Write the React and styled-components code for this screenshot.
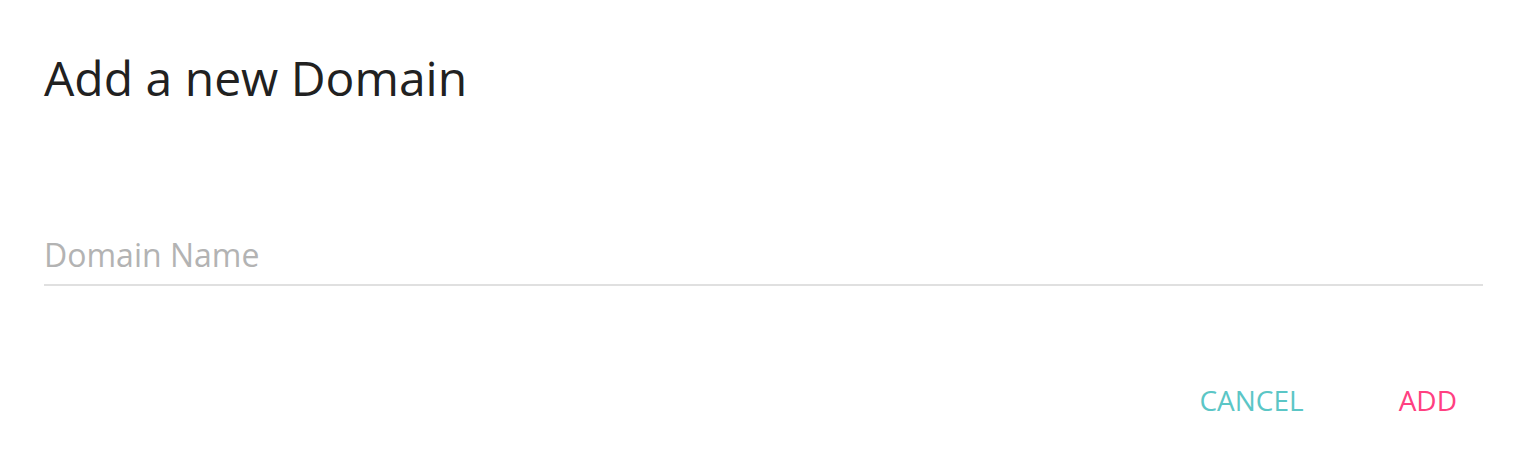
import React, {useState} from 'react';
import styled, {createGlobalStyle} from 'styled-components';

const GlobalStyle = createGlobalStyle`
    body {
        margin: 0;
        background: #ffffff;
        font-family: "Open Sans", "Liberation Sans", sans-serif;
    }
`;

const Dialog = styled.div`
    width: 1520px;
    height: 450px;
    box-sizing: border-box;
    padding: 45px 37px 0 44px;
    display: flex;
    flex-direction: column;
`;

const Title = styled.h2`
    margin: 0;
    font-size: 48px;
    font-weight: 400;
    line-height: normal;
    color: #212121;
`;

const Field = styled.div`
    margin-top: 123px;
    border-bottom: 2px solid #e0e0e0;
`;

const Input = styled.input`
    display: block;
    width: 100%;
    box-sizing: border-box;
    border: none;
    outline: none;
    padding: 0 0 8px;
    font-family: "Open Sans", "Liberation Sans", sans-serif;
    font-size: 32px;
    line-height: normal;
    color: #212121;
    background: transparent;

    &::placeholder {
        color: #b3b3b3;
        opacity: 1;
    }
`;

const Actions = styled.div`
    margin-top: 95px;
    display: flex;
    justify-content: flex-end;
    gap: 95px;
    padding-right: 26px;
`;

const Button = styled.button`
    border: none;
    background: none;
    padding: 0;
    font-family: "Open Sans", "Liberation Sans", sans-serif;
    font-size: 28px;
    line-height: normal;
    text-transform: uppercase;
    color: ${props => props.$primary ? '#ff4081' : '#5bc6c6'};
    cursor: pointer;
`;

const App = () => {
    const [name, setName] = useState('');
    return (
        <Dialog>
            <GlobalStyle />
            <Title>Add a new Domain</Title>
            <Field>
                <Input
                    placeholder="Domain Name"
                    value={name}
                    onChange={e => setName(e.target.value)}
                />
            </Field>
            <Actions>
                <Button>Cancel</Button>
                <Button $primary>Add</Button>
            </Actions>
        </Dialog>
    );
};

export default App;
